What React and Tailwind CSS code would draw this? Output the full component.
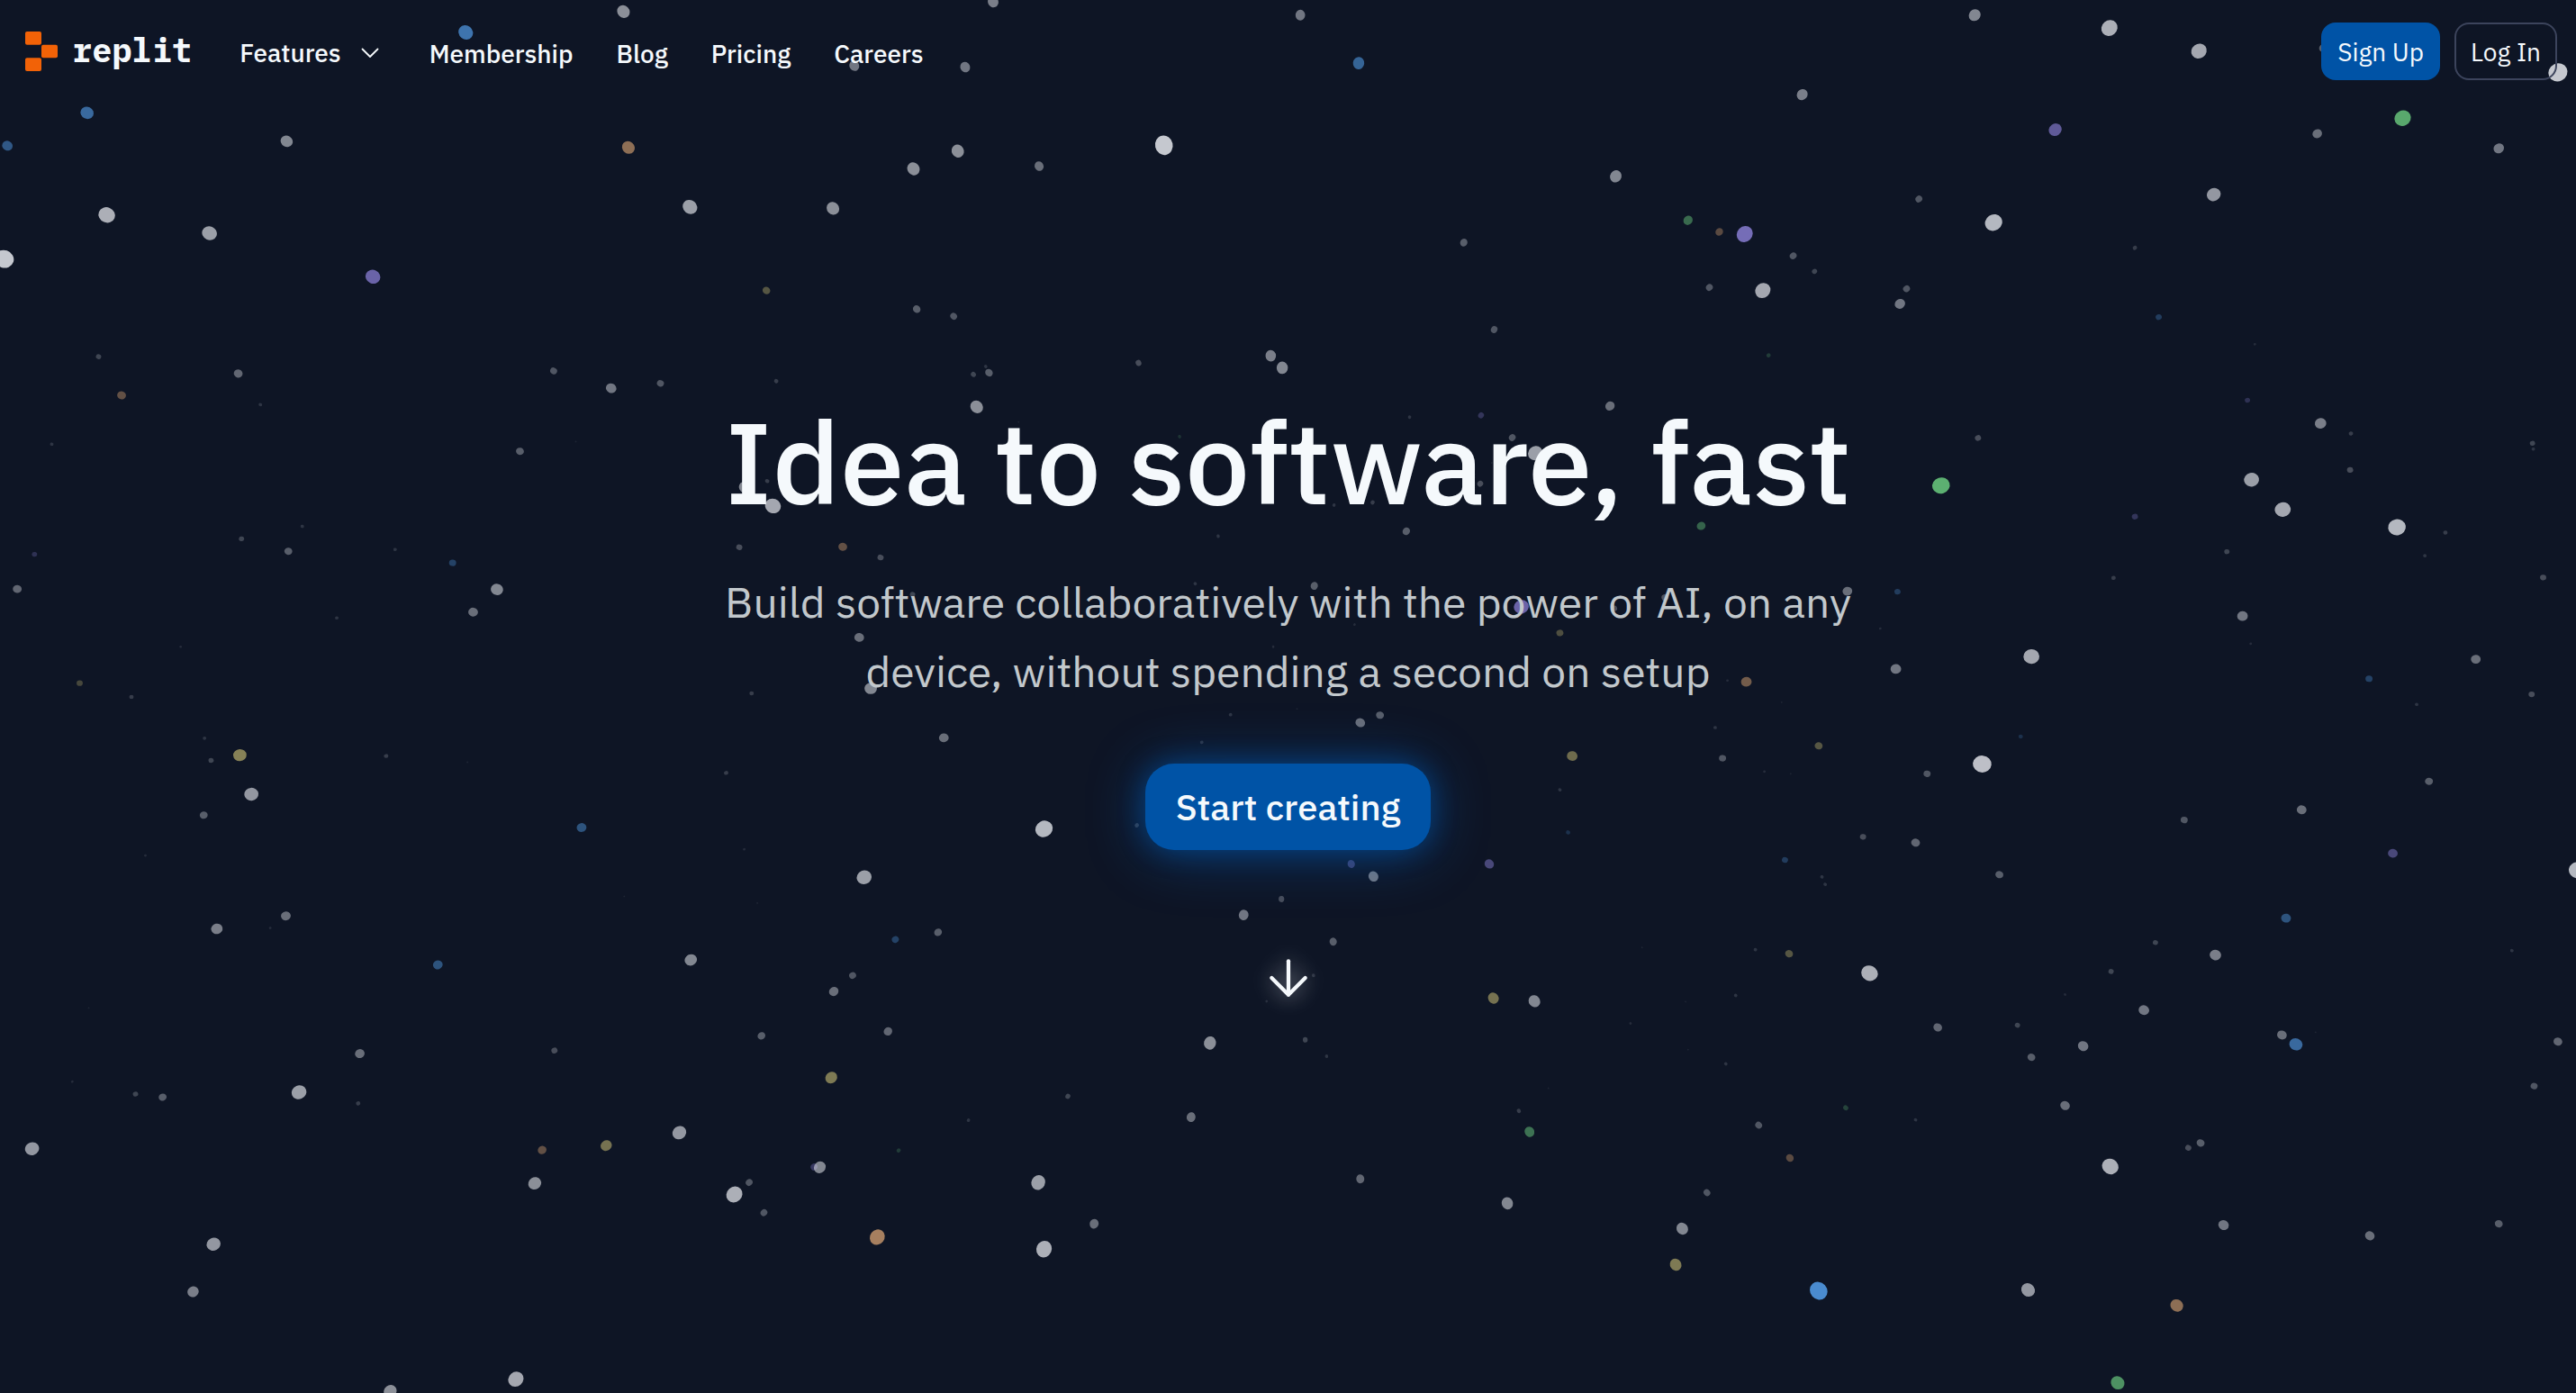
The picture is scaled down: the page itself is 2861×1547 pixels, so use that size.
import { ArrowDown } from "lucide-react";

// Star positions per quarter of the sky: [x, y, diameter, tint], with x and y
// on a grid that is 1568 units wide and 1568 units high in each quarter.
const QUARTER = 1568;

const TINTS = {
  white: "#eef0f5",
  blue: "#5badff",
  green: "#78e68c",
  purple: "#a092f5",
  orange: "#f2b57c",
  yellow: "#e6d780",
};

const topLeft = [
  [759, 26, 15], [1209, 4, 13], [567, 73, 17, "blue"], [1175, 151, 12], [1040, 148, 12], [106, 254, 15, "blue"],
  [9, 328, 12, "blue"], [349, 318, 14], [765, 332, 15, "orange"], [1166, 340, 15], [1112, 380, 15], [1265, 374, 11],
  [1417, 327, 22], [840, 466, 17], [1014, 469, 15], [130, 484, 19], [255, 525, 17], [5, 583, 22],
  [454, 623, 17, "purple"], [933, 654, 9, "yellow"], [1116, 696, 9], [1161, 712, 8], [120, 803, 6], [290, 841, 10],
  [148, 890, 10, "orange"], [317, 911, 4], [674, 835, 8], [744, 874, 12], [804, 863, 8], [945, 858, 5],
  [1200, 825, 4], [1204, 839, 9], [1185, 843, 6], [1386, 817, 7], [1547, 801, 13], [1561, 828, 14], [1189, 916, 15],
  [63, 1000, 4], [633, 1016, 9], [701, 994, 2], [1240, 950, 2], [1436, 983, 4, "green"], [907, 1097, 14], [934, 1083, 5],
  [941, 1139, 18], [368, 1185, 4], [294, 1213, 6], [351, 1241, 9], [481, 1237, 4], [42, 1248, 6, "purple"],
  [551, 1267, 8, "blue"], [900, 1232, 7], [1026, 1231, 10, "orange"], [1072, 1255, 7], [1483, 1207, 4], [21, 1326, 10],
  [605, 1327, 14], [576, 1378, 11], [410, 1391, 4], [1455, 1314, 4], [1111, 1338, 6], [220, 1456, 3], [1550, 1456, 3],
  [1046, 1435, 11], [97, 1538, 7, "yellow"], [915, 1561, 5], [1060, 1550, 14],
];

const topRight = [
  [15, 34, 12], [86, 142, 14, "blue"], [836, 34, 14], [1000, 63, 19], [1109, 115, 18], [1260, 108, 9], [1546, 163, 22],
  [626, 213, 13], [934, 292, 15, "purple"], [1357, 266, 19, "green"], [1253, 301, 11], [1474, 334, 12], [399, 397, 14],
  [487, 496, 11, "green"], [525, 522, 9, "orange"], [556, 527, 19, "purple"], [768, 448, 8], [859, 501, 20],
  [1127, 438, 16], [214, 546, 9], [615, 576, 8], [641, 611, 6], [513, 647, 8], [578, 654, 18], [753, 650, 8],
  [745, 684, 12], [1031, 558, 5], [1060, 714, 7, "blue"], [251, 742, 8], [585, 800, 5, "green"], [1177, 775, 3],
  [392, 914, 11], [148, 939, 4], [235, 935, 7, "purple"], [273, 985, 8], [301, 1020, 17], [234, 1089, 7], [248, 1042, 2],
  [840, 986, 7], [795, 1093, 20, "green"], [1168, 901, 6, "purple"], [1257, 953, 13], [1294, 976, 5], [1293, 1058, 7],
  [1515, 998, 6], [1516, 1011, 4], [1173, 1080, 17], [1211, 1147, 18], [1350, 1187, 20], [1031, 1163, 7, "purple"],
  [144, 1196, 9], [503, 1184, 10, "green"], [103, 1131, 5], [56, 1137, 4], [1409, 1199, 5], [1143, 1242, 6],
  [1384, 1251, 4], [1005, 1301, 5], [1528, 1300, 7], [32, 1319, 9], [681, 1331, 11], [742, 1332, 7, "blue"],
  [284, 1366, 17, "purple"], [397, 1370, 7], [459, 1345, 8], [331, 1425, 8, "yellow"], [81, 1406, 3], [721, 1415, 3],
  [1162, 1387, 12], [905, 1478, 18], [740, 1506, 12], [558, 1535, 12, "orange"], [535, 1532, 3], [1446, 1484, 11],
  [1316, 1528, 8, "blue"], [1172, 1449, 3], [1514, 1563, 7],
];

const bottomLeft = [
  [160, 1, 5], [249, 94, 4], [292, 132, 15, "yellow"], [257, 144, 6], [470, 134, 5], [569, 148, 2], [306, 220, 16],
  [248, 267, 9], [1149, 93, 11], [884, 172, 5], [1463, 103, 4], [1498, 41, 4], [1384, 290, 5], [708, 295, 11, "blue"],
  [906, 344, 3], [177, 358, 3], [1271, 298, 20], [1052, 407, 17], [760, 450, 2], [922, 465, 2], [348, 494, 11],
  [264, 523, 13], [329, 521, 3], [1142, 531, 9], [1090, 547, 8, "blue"], [841, 593, 14], [533, 604, 11, "blue"],
  [1038, 628, 8], [1015, 664, 11], [1514, 492, 12], [1560, 456, 7], [1542, 686, 3], [108, 701, 2], [927, 764, 9],
  [1081, 754, 10], [438, 804, 11], [675, 797, 7], [1473, 780, 15], [1012, 858, 14, "yellow"], [88, 867, 3],
  [165, 895, 6], [198, 902, 9], [364, 891, 17], [436, 916, 5], [1300, 900, 6], [1179, 954, 4], [1450, 947, 11],
  [827, 982, 16], [738, 1011, 13, "yellow"], [660, 1021, 10, "orange"], [1094, 1022, 5, "green"], [39, 1018, 16],
  [651, 1096, 15], [991, 1059, 8, "purple"], [998, 1060, 14], [912, 1094, 8], [894, 1121, 19], [930, 1162, 8],
  [1264, 1094, 17], [1332, 1187, 11], [1068, 1217, 18, "orange"], [1271, 1244, 19], [260, 1233, 16], [235, 1340, 13],
  [628, 1537, 18], [475, 1564, 15],
];

const bottomRight = [
  [88, 59, 11], [112, 42, 9], [11, 28, 2], [346, 134, 12, "yellow"], [646, 111, 9, "yellow"], [529, 139, 8], [520, 70, 4],
  [601, 13, 2], [580, 169, 3], [612, 174, 2], [892, 90, 5, "blue"], [1374, 18, 4], [845, 152, 21], [778, 174, 8],
  [1389, 191, 9], [331, 210, 4], [341, 306, 5, "blue"], [1234, 255, 11], [1091, 278, 8], [700, 316, 7], [764, 329, 10],
  [77, 377, 9, "purple"], [245, 377, 11, "purple"], [104, 405, 12], [605, 368, 7, "blue"], [650, 406, 4], [654, 423, 4],
  [866, 401, 9], [1345, 353, 11, "purple"], [1570, 391, 20], [1215, 499, 11, "blue"], [55, 552, 9], [1056, 554, 6],
  [1129, 582, 13], [610, 579, 9, "yellow"], [569, 570, 4], [431, 565, 2], [31, 628, 4], [1490, 572, 4], [708, 623, 19],
  [1002, 619, 6], [946, 671, 3], [250, 679, 13, "yellow"], [300, 686, 14], [545, 673, 4], [484, 687, 2], [417, 736, 3],
  [1042, 706, 12], [791, 745, 10], [888, 740, 6], [1210, 762, 11], [1227, 783, 15, "blue"], [1251, 756, 2],
  [1546, 777, 10], [968, 787, 12], [905, 812, 9], [21, 773, 6], [47, 810, 4], [487, 795, 2], [533, 827, 4], [317, 882, 2],
  [1517, 877, 8], [281, 933, 5], [946, 921, 11], [679, 926, 6, "green"], [764, 953, 4], [294, 980, 12, "green"],
  [573, 965, 8], [611, 1039, 9, "orange"], [1111, 1005, 9], [1096, 1016, 7], [1001, 1058, 19], [88, 1086, 10],
  [267, 1141, 14], [510, 1117, 8], [480, 1198, 14], [1139, 1190, 12], [1474, 1187, 9], [1317, 1214, 11],
  [472, 1279, 14, "yellow"], [646, 1338, 21, "blue"], [901, 1336, 16], [1082, 1371, 15, "orange"], [1010, 1545, 16, "green"],
];

const stars = [
  [topLeft, 0, 0],
  [topRight, 1, 0],
  [bottomLeft, 0, 1],
  [bottomRight, 1, 1],
].flatMap(([list, column, row]) =>
  list.map(([x, y, size, tint = "white"]) => ({
    x: (x + column * QUARTER) / (QUARTER * 2),
    y: (y + row * QUARTER) / (QUARTER * 2),
    r: size / 2.15,
    fill: TINTS[tint],
  })),
);

function Starfield() {
  return (
    <svg className="pointer-events-none absolute inset-0 h-full w-full" aria-hidden="true">
      {stars.map(({ x, y, r, fill }) => {
        // Stars stretch slightly away from the middle of the sky.
        const angle = (Math.atan2((y - 0.5) * 0.54, x - 0.5) * 180) / Math.PI;
        return (
          <ellipse
            key={`${x}-${y}`}
            cx={`${x * 100}%`}
            cy={`${y * 100}%`}
            rx={r * 1.06}
            ry={r * 0.96}
            fill={fill}
            fillOpacity={r * 0.08}
            style={{ transformBox: "fill-box", transformOrigin: "center", transform: `rotate(${angle}deg)` }}
          />
        );
      })}
    </svg>
  );
}

function Logo() {
  return (
    <a href="#" aria-label="replit" className="flex items-center gap-4">
      <svg className="h-11 w-9" viewBox="0 0 36 44" fill="#f26207" aria-hidden="true">
        <rect x="0" y="0" width="18" height="14.7" rx="2" />
        <rect x="18" y="14.7" width="18" height="14.6" rx="2" />
        <rect x="0" y="29.3" width="18" height="14.7" rx="2" />
      </svg>
      <span className="pb-1 font-['IBM_Plex_Mono','Liberation_Mono',monospace] text-[37px] leading-10 font-bold">
        replit
      </span>
    </a>
  );
}

const links = ["Membership", "Blog", "Pricing", "Careers"];

export default function App() {
  return (
    <div className="relative min-h-screen overflow-hidden bg-[#0e1525] font-['IBM_Plex_Sans','Roboto','Noto_Sans',sans-serif] text-[#f5f9fc]">
      <Starfield />
      <header className="relative flex items-center justify-between pt-[25px] pr-[21px] pl-7">
        <div className="flex items-center gap-[53px]">
          <Logo />
          <nav className="flex items-center gap-12 pt-1 text-[28px] leading-10 font-medium">
            <button type="button" className="flex items-center gap-[22px] pr-2">
              Features
              <svg
                className="h-3 w-5"
                viewBox="0 0 20 12"
                fill="none"
                stroke="currentColor"
                strokeWidth="1.8"
                strokeLinecap="round"
                strokeLinejoin="round"
                aria-hidden="true"
              >
                <path d="M1.500 1.500 10 10l8.500-8.500" />
              </svg>
            </button>
            {links.map((link) => (
              <a key={link} href="#" className="pt-0.5">
                {link}
              </a>
            ))}
          </nav>
        </div>
        <div className="flex gap-4 text-[28px] leading-10">
          <button type="button" className="h-16 rounded-2xl bg-[#0053a6] px-[18px] pt-0.5">
            Sign Up
          </button>
          <button type="button" className="h-16 rounded-2xl border-2 border-[#3c445c] px-4 pt-0.5">
            Log In
          </button>
        </div>
      </header>
      <main className="relative flex flex-col items-center px-8 pt-[359px] text-center">
        <h1 className="text-[128px] leading-none font-medium">Idea to software, fast</h1>
        <p className="mt-[54px] max-w-[1280px] text-5xl leading-[77px] text-[#c2c8cc]">
          Build software collaboratively with the power of AI, on any device, without spending a second on setup
        </p>
        <button
          type="button"
          className="mt-16 h-24 rounded-[32px] bg-[#0053a6] px-[34px] text-[40px] leading-none font-medium shadow-[0_0_28px_rgba(0,83,166,0.5),0_4px_64px_rgba(0,121,242,0.4)]"
        >
          Start creating
        </button>
        <a href="#" aria-label="Scroll down" className="mt-[110px]">
          <ArrowDown className="size-16 drop-shadow-[0_0_12px_rgba(245,249,252,0.6)]" strokeWidth={1.6} />
        </a>
      </main>
    </div>
  );
}
